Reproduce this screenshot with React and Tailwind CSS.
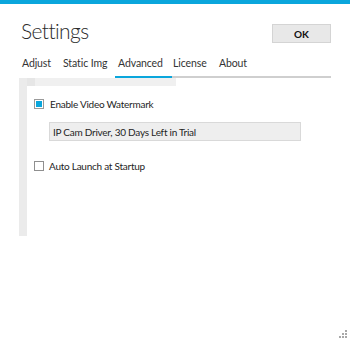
export default function App() {
  return (
    <div className="relative w-[350px] h-[341px] bg-white text-[#1e1e1e] overflow-hidden" style={{ fontFamily: 'Lato, "Noto Sans", sans-serif' }}>
      <div className="h-[4px] bg-[#0aa6dc]" />

      <div className="flex items-start justify-between pl-[21px] pr-[19px] pt-[12px]">
        <h1 className="text-[21px] font-light leading-[30px] tracking-[-0.6px] text-[#2b2b2b]">Settings</h1>
        <button className="mt-[8px] w-[59px] h-[19px] bg-[#e8e8e8] border border-[#d4d4d4] text-[10px] font-bold leading-none text-[#111]">
          OK
        </button>
      </div>

      <div className="flex items-end ml-[19px] w-[312px] mt-[9px] text-[10.5px] leading-[16px] tracking-[-0.1px] text-[#333]">
        <div className="w-[41px] pl-[3px] pb-[7px]">Adjust</div>
        <div className="w-[55px] pl-[3px] pb-[7px]">Static Img</div>
        <div className="w-[57px] pl-[3px] pb-[5px] border-b-[2px] border-[#0aa6dc]">Advanced</div>
        <div className="w-[44px] pl-[1px] pb-[5px] border-b-[2px] border-[#cfcfcf]">License</div>
        <div className="flex-1 pl-[3px] pb-[5px] border-b-[2px] border-[#cfcfcf]">About</div>
      </div>

      <div className="flex ml-[19px]">
        <div className="w-[8px] h-[158px] bg-[#ebebeb]" />
        <div className="flex flex-col">
          <div className="flex h-[8px]">
            <div className="w-[8px] bg-[#e6e6e6]" />
            <div className="w-[141px] bg-[#f0f0f0]" />
          </div>

          <div className="pl-[7px] pt-[11px] text-[10px] leading-[14px] tracking-[-0.25px]">
            <label className="flex items-center gap-[6px]">
              <span className="flex items-center justify-center w-[10px] h-[10px] border border-[#9a9a9a] bg-white">
                <span className="w-[6px] h-[6px] bg-[#0aa6dc]" />
              </span>
              <span>Enable Video Watermark</span>
            </label>

            <div className="ml-[15px] mt-[11px] w-[252px] h-[19px] bg-[#eeeeee] border border-[#d9d9d9] pl-[3px] flex items-center">
              IP Cam Driver, 30 Days Left in Trial
            </div>

            <label className="flex items-center gap-[5px] mt-[18px]">
              <span className="w-[10px] h-[10px] border border-[#8f8f8f] bg-white" />
              <span>Auto Launch at Startup</span>
            </label>
          </div>
        </div>
      </div>

      <svg className="absolute right-[3px] bottom-[3px]" width="8" height="8" viewBox="0 0 8 8">
        <g fill="#a8a8a8">
          <rect x="6" y="0" width="2" height="2" />
          <rect x="3" y="3" width="2" height="2" />
          <rect x="6" y="3" width="2" height="2" />
          <rect x="0" y="6" width="2" height="2" />
          <rect x="3" y="6" width="2" height="2" />
          <rect x="6" y="6" width="2" height="2" />
        </g>
      </svg>
    </div>
  );
}
